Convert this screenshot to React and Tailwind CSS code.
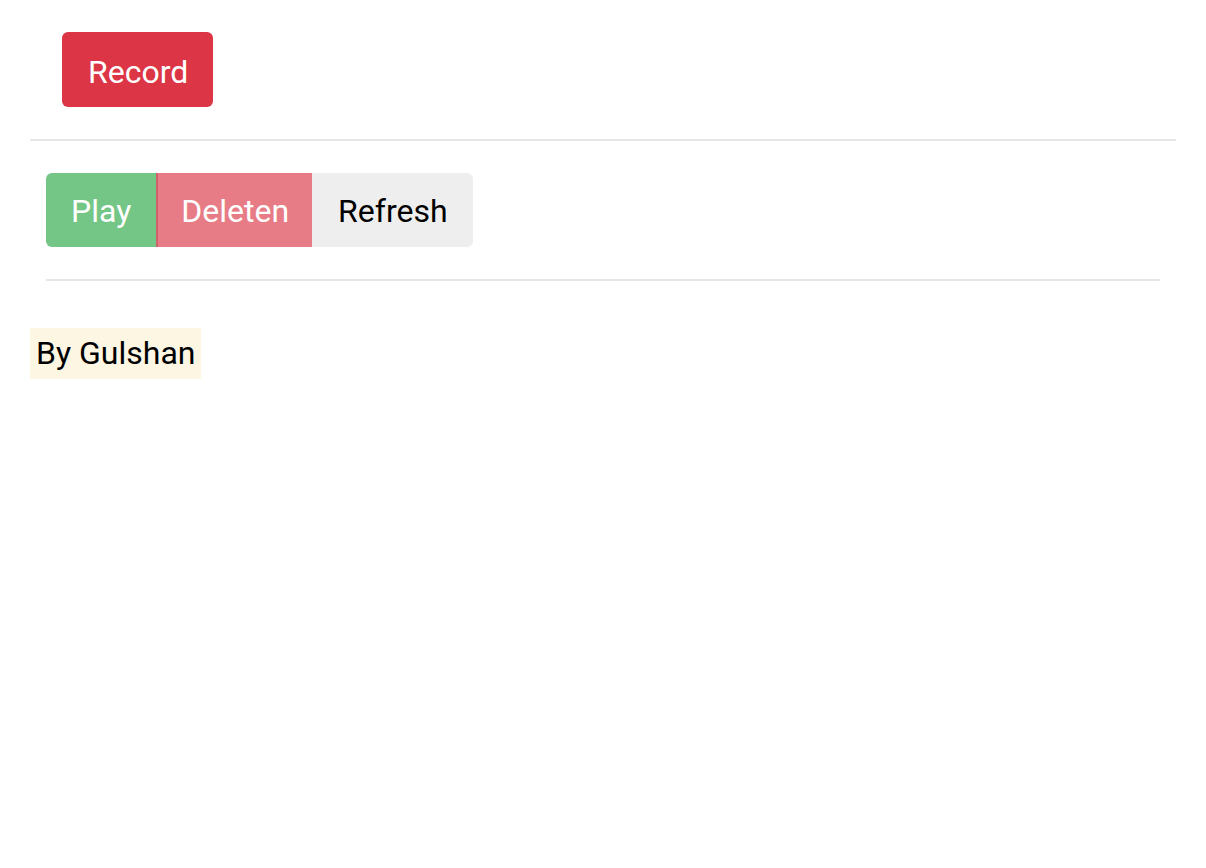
import React from 'react';

const App = () => {
  return (
    <div className="min-h-screen bg-white px-[30px] pt-[32px] font-['Roboto',sans-serif]">
      <div className="pl-[32px]">
        <button className="h-[75px] rounded-[6px] bg-[#dc3545] pl-[26px] pr-[25px] pt-[4px] text-[32px] text-white">
          Record
        </button>
      </div>

      <hr className="mt-[32px] border-t-2 border-[#e6e6e6]" />

      <div className="px-[16px]">
        <div className="mt-[32px] flex">
          <button className="h-[74px] rounded-l-[6px] bg-[#74c686] px-[25px] pt-[2px] text-[32px] text-white">
            Play
          </button>
          <button className="h-[74px] border-l-2 border-[#d0606b] bg-[#e77c86] px-[23px] pt-[2px] text-[32px] text-white">
            Deleten
          </button>
          <button className="h-[74px] rounded-r-[6px] bg-[#eeeeee] pl-[26px] pr-[25px] pt-[2px] text-[32px] text-black">
            Refresh
          </button>
        </div>

        <hr className="mt-[32px] border-t-2 border-[#e6e6e6]" />
      </div>

      <div className="mt-[47px]">
        <span className="inline-block bg-[#fcf6e3] px-[6px] py-[6px] text-[32px] leading-[39px] text-black">
          By Gulshan
        </span>
      </div>
    </div>
  );
};

export default App;
